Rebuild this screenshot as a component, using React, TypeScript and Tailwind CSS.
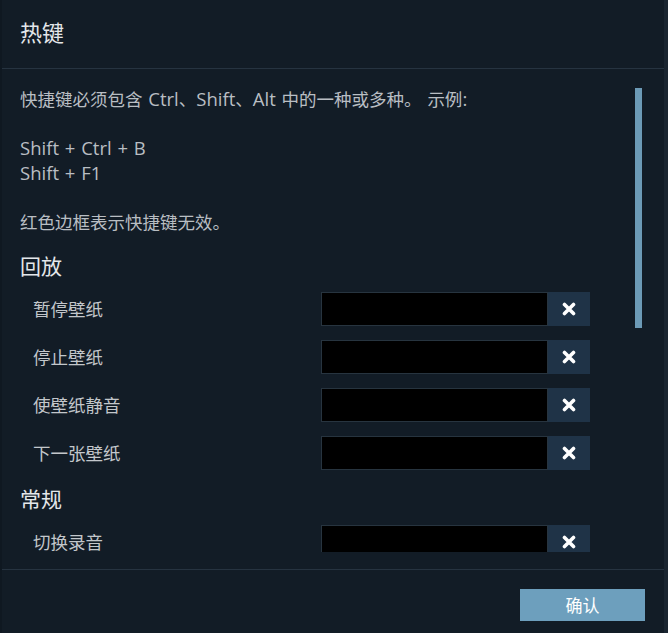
import React from 'react';

interface HotkeyRow {
  label: string;
}

interface HotkeyGroup {
  title: string;
  rows: HotkeyRow[];
}

const groups: HotkeyGroup[] = [
  {
    title: '回放',
    rows: [{ label: '暂停壁纸' }, { label: '停止壁纸' }, { label: '使壁纸静音' }, { label: '下一张壁纸' }],
  },
  {
    title: '常规',
    rows: [{ label: '切换录音' }],
  },
];

const font = "font-['Open_Sans','Noto_Sans_CJK_SC',sans-serif]";

// latin runs are set a bit larger, as in the Windows UI font
const L = ({ children }: { children: React.ReactNode }) => (
  <span className="text-[18.5px] [word-spacing:1px]">{children}</span>
);

const ClearIcon = () => (
  <svg width="14" height="14" viewBox="0 0 14 14" fill="none">
    <path d="M2.5 2.5 L11.5 11.5 M11.5 2.5 L2.5 11.5" stroke="#ffffff" strokeWidth="3.6" strokeLinecap="round" />
  </svg>
);

const App: React.FC = () => {
  return (
    <div className={`w-[668px] h-[633px] bg-[#121c26] flex flex-col border-l-2 border-r-4 border-l-[#0f1821] border-r-[#1a2530] ${font}`}>
      {/* Header */}
      <div className="h-[68px] shrink-0 flex items-center px-[18px] pb-[4px]">
        <h1 className="text-[22px] leading-none text-[#e4e7ea]">热键</h1>
      </div>
      <div className="h-px bg-[#263340]" />

      {/* Scroll area */}
      <div className="h-[483px] overflow-hidden flex">
        <div className="w-[633px] pl-[18px] pt-[18px]">
          <p className="text-[17.5px] leading-[24.6px] text-[#b9bec3]">
            快捷键必须包含<L> Ctrl</L>、<L>Shift</L>、<L>Alt </L>中的一种或多种。<L> </L>示例<L>:</L>
            <br />
            <br />
            <L>Shift + Ctrl + B</L>
            <br />
            <L>Shift + F1</L>
            <br />
            <br />
            红色边框表示快捷键无效。
          </p>

          {groups.map((group, gi) => (
            <div key={gi} className={gi === 0 ? 'mt-[16px]' : 'mt-[14px]'}>
              <h2 className="text-[21px] leading-[30px] text-[#e4e7ea]">{group.title}</h2>
              <div className="flex flex-col gap-[14px] mt-[11px]">
                {group.rows.map((row, ri) => (
                  <div key={ri} className="flex items-center h-[34px]">
                    <div className="w-[301px] pl-[13px] text-[17.5px] leading-[18px] text-[#c3c7cb]">{row.label}</div>
                    <div className="w-[227px] h-[34px] bg-black border border-[#27343f]" />
                    <button className="w-[42px] h-[34px] bg-[#1f3347] flex items-center justify-center">
                      <ClearIcon />
                    </button>
                  </div>
                ))}
              </div>
            </div>
          ))}
        </div>
        <div className="w-[8px] pt-[19px]">
          <div className="w-[7px] h-[240px] bg-[#6c9ab6]" />
        </div>
      </div>

      {/* Footer */}
      <div className="h-px bg-[#263340] mt-[17px]" />
      <div className="flex justify-end pt-[19px] pr-[19px]">
        <button className="w-[125px] h-[32px] bg-[#6d9fbd] text-white text-[17px] leading-none">确认</button>
      </div>
    </div>
  );
};

export default App;
